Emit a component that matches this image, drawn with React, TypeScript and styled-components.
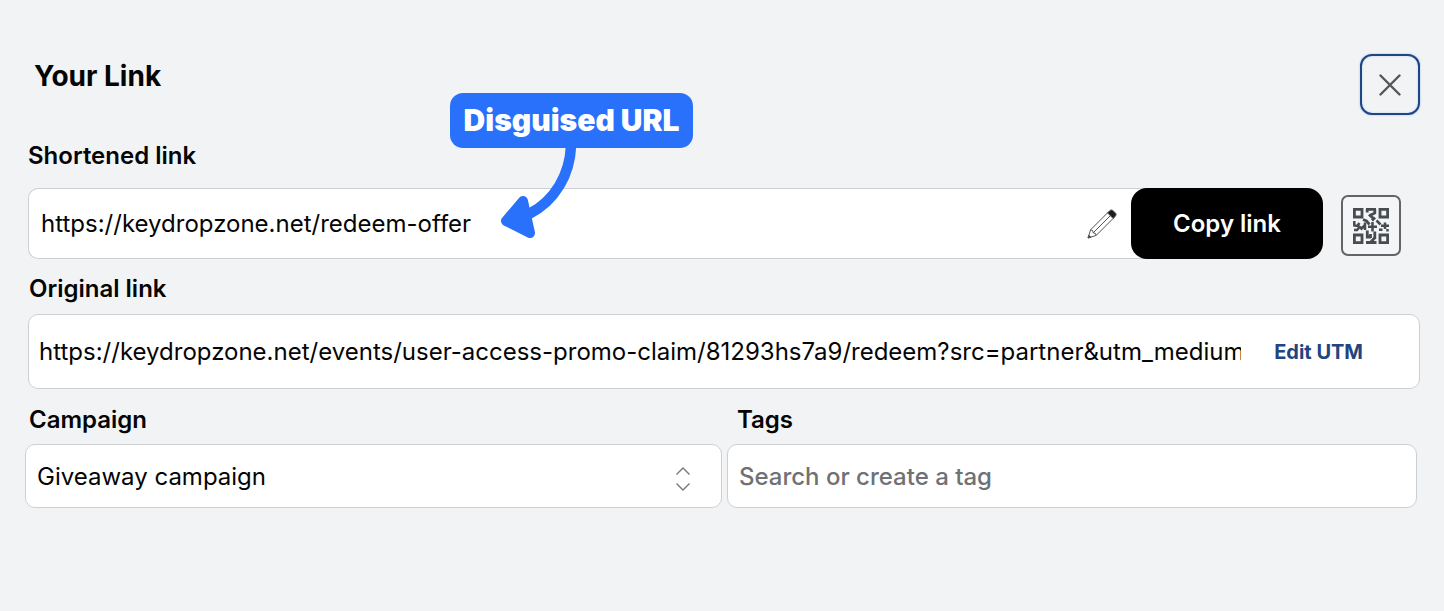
import React, { useState } from "react";
import styled, { createGlobalStyle, css } from "styled-components";

const GlobalStyle = createGlobalStyle`
  *, *::before, *::after { box-sizing: border-box; }
  body {
    margin: 0;
    background: #f1f3f5;
    color: #050505;
    font-family: Inter, "Liberation Sans", sans-serif;
  }
  button, input, select { font: inherit; color: inherit; }
`;

const Page = styled.main`
  padding: 54px 24px 100px;
`;

const Header = styled.header`
  display: flex;
  justify-content: space-between;
  align-items: flex-start;
  padding-left: 10px;
`;

const Title = styled.h1`
  margin: 0;
  font-size: 28px;
  line-height: 44px;
  font-weight: 700;
`;

const CloseButton = styled.button`
  display: grid;
  place-items: center;
  width: 60px;
  height: 61px;
  padding: 0;
  border: 2px solid #1f4583;
  border-radius: 12px;
  background: #f1f3f5;
  box-shadow: 0 0 2px #8fb8ee, inset 0 0 2px #b5d0f3;
  color: #55565a;
`;

const Section = styled.section<{ $top: number; $gap: number }>`
  position: relative;
  display: flex;
  flex-direction: column;
  gap: ${(p) => p.$gap}px;
  margin-top: ${(p) => p.$top}px;
  padding-left: 4px;
`;

const Label = styled.label<{ $indent?: number }>`
  padding-left: ${(p) => p.$indent ?? 0}px;
  font-size: 24px;
  line-height: 30px;
  font-weight: 600;
`;

const Row = styled.div`
  display: flex;
  align-items: center;
`;

const boxStyle = css`
  border: 1px solid #cdd0d3;
  border-radius: 10px;
  background: #fff;
`;

const FieldBox = styled.div`
  ${boxStyle}
  display: flex;
  align-items: center;
  min-width: 0;
`;

const ShortBox = styled(FieldBox)`
  flex: 1;
  height: 71px;
  border-right: 0;
  border-radius: 10px 0 0 10px;
  margin-right: -16px;
  padding: 0 30px 0 12px;
`;

const OriginalBox = styled(FieldBox)`
  height: 75px;
  gap: 33px;
  padding: 0 56px 0 10px;
`;

const TextInput = styled.input`
  flex: 1;
  min-width: 0;
  height: 40px;
  padding: 0;
  border: 0;
  outline: 0;
  background: transparent;
  font-size: 24px;
`;

const IconButton = styled.button`
  display: grid;
  place-items: center;
  padding: 0;
  border: 0;
  background: transparent;
`;

const CopyButton = styled.button`
  position: relative;
  width: 192px;
  height: 71px;
  padding: 0;
  border: 0;
  border-radius: 16px;
  background: #000;
  color: #fff;
  font-size: 24px;
  font-weight: 600;
`;

const QrButton = styled.button`
  display: grid;
  place-items: center;
  width: 60px;
  height: 61px;
  margin: 4px 19px 0 18px;
  padding: 0;
  border: 2px solid #626568;
  border-radius: 7px;
  background: #f3f5f7;
  color: #484b4f;
`;

const UtmButton = styled.button`
  padding: 0;
  border: 0;
  background: transparent;
  color: #234480;
  font-size: 20px;
  font-weight: 700;
`;

const Columns = styled.div`
  display: flex;
  gap: 5px;
  margin: 16px 3px 0 1px;
`;

const Column = styled.div<{ $grow: number }>`
  display: flex;
  flex-direction: column;
  gap: 9px;
  flex: ${(p) => p.$grow};
  min-width: 0;
`;

const SelectWrap = styled.div`
  position: relative;
  display: flex;
`;

const Select = styled.select`
  ${boxStyle}
  appearance: none;
  width: 100%;
  height: 64px;
  padding: 0 60px 0 11px;
  font-size: 24px;
`;

const SelectArrows = styled.svg`
  position: absolute;
  top: 22px;
  right: 31px;
  pointer-events: none;
`;

const TagInput = styled.input`
  ${boxStyle}
  width: 100%;
  height: 64px;
  padding: 0 11px;
  font-size: 24px;
  &::placeholder { color: #707174; opacity: 1; font-weight: 500; }
`;

const Callout = styled.div`
  position: absolute;
  top: -48px;
  left: 426px;
  z-index: 2;
  width: 243px;
  pointer-events: none;
`;

const CalloutText = styled.div`
  border-radius: 13px;
  background: #2970fb;
  color: #fff;
  font-size: 30px;
  line-height: 55px;
  font-weight: 900;
  text-align: center;
  white-space: nowrap;
`;

const CalloutArrow = styled.svg`
  position: absolute;
  top: 53px;
  left: 49px;
`;

const CloseIcon = () => (
  <svg width="22" height="22" viewBox="0 0 22 22" fill="none" stroke="currentColor" strokeWidth="2.4" strokeLinecap="round" aria-hidden="true">
    <path d="M1.5 1.5 20.5 20.5M20.5 1.5 1.5 20.5" />
  </svg>
);

const PencilIcon = () => (
  <svg width="30" height="30" viewBox="0 0 30 30" fill="none" stroke="#555" strokeWidth="1" strokeLinejoin="round" aria-hidden="true">
    <path d="M1 29 3.6 20.8 20.6 3.8 26.2 9.4 9.2 26.4Z" />
    <path d="M3.6 20.8 5.6 21.6 6.2 23.8 8.4 24.4 9.2 26.4M6.2 23.8 23.4 6.6" />
    <path d="M1 29 1.8 26.2 3.8 28.2Z" fill="#222" />
    <path d="M20.6 3.8 23 1.4Q24.4.4 25.8 1.4L28.6 4.2Q29.6 5.6 28.6 7L26.2 9.4Z" fill="#1d1d1d" />
  </svg>
);

const QrIcon = () => (
  <svg width="36" height="36" viewBox="0 0 36 36" fill="none" stroke="currentColor" strokeWidth="2.8" aria-hidden="true">
    <path d="M1.4 1.4h7.6v7.6H1.4zM27 1.4h7.6v7.6H27zM1.4 27h7.6v7.6H1.4zM27 27h7.6v7.6H27z" />
    <path d="M13 1.4h10M14.2 1v3.6M21.8 1v4L17 7.5M16 6.5l5.500 5M22 9.500l-3 3M10 11.500l3.500 1.500 3 3.500" />
    <path d="M1.300 13v4.500l3 .5 2.200-3M1 22h3l3.500-4M7.500 21.500l4-4M12 14.500V22M15 18.800h9M19.500 14v9.500M23.500 12.500l4 4M26 21.800h3.500M28 17.800h8M32 14.500v6.500M34.500 21v2.500" strokeWidth="2.5" />
    <path d="M14.300 22.500V29h3.500M21.800 23.500V31M17.500 26v4M13 34.500h10.500M21.500 30l-4 4.500" />
  </svg>
);

export default function App() {
  const [shortUrl, setShortUrl] = useState("https://keydropzone.net/redeem-offer");
  const [originalUrl, setOriginalUrl] = useState(
    "https://keydropzone.net/events/user-access-promo-claim/81293hs7a9/redeem?src=partner&utm_medium"
  );

  return (
    <>
      <GlobalStyle />
      <Page>
        <Header>
          <Title>Your Link</Title>
          <CloseButton type="button" aria-label="Close">
            <CloseIcon />
          </CloseButton>
        </Header>

        <Section $top={26} $gap={17}>
          <Label htmlFor="short">Shortened link</Label>
          <Row>
            <ShortBox>
              <TextInput id="short" value={shortUrl} onChange={(e) => setShortUrl(e.target.value)} />
              <IconButton type="button" aria-label="Edit link">
                <PencilIcon />
              </IconButton>
            </ShortBox>
            <CopyButton type="button">Copy link</CopyButton>
            <QrButton type="button" aria-label="QR code">
              <QrIcon />
            </QrButton>
          </Row>
          <Callout>
            <CalloutText>Disguised URL</CalloutText>
            <CalloutArrow width="84" height="94" viewBox="0 0 84 94" aria-hidden="true">
              <path d="M72 0C71 28 56 55 30 68" fill="none" stroke="#2970fb" strokeWidth="10.5" />
              <path d="M7 75 24 55 31 87Z" fill="#2970fb" stroke="#2970fb" strokeWidth="10" strokeLinejoin="round" />
            </CalloutArrow>
          </Callout>
        </Section>

        <Section $top={15} $gap={10}>
          <Label htmlFor="original" $indent={1}>Original link</Label>
          <OriginalBox>
            <TextInput id="original" value={originalUrl} onChange={(e) => setOriginalUrl(e.target.value)} />
            <UtmButton type="button">Edit UTM</UtmButton>
          </OriginalBox>
        </Section>

        <Columns>
          <Column $grow={101}>
            <Label htmlFor="campaign" $indent={4}>Campaign</Label>
            <SelectWrap>
              <Select id="campaign" defaultValue="giveaway">
                <option value="giveaway">Giveaway campaign</option>
              </Select>
              <SelectArrows width="16" height="26" viewBox="0 0 16 26" fill="none" stroke="#77787b" strokeWidth="1.4" aria-hidden="true">
                <path d="M1.5 8.5 8 2l6.5 6.5M1.5 17.5 8 24l6.5-6.5" />
              </SelectArrows>
            </SelectWrap>
          </Column>
          <Column $grow={100}>
            <Label htmlFor="tags" $indent={10}>Tags</Label>
            <TagInput id="tags" placeholder="Search or create a tag" />
          </Column>
        </Columns>
      </Page>
    </>
  );
}
